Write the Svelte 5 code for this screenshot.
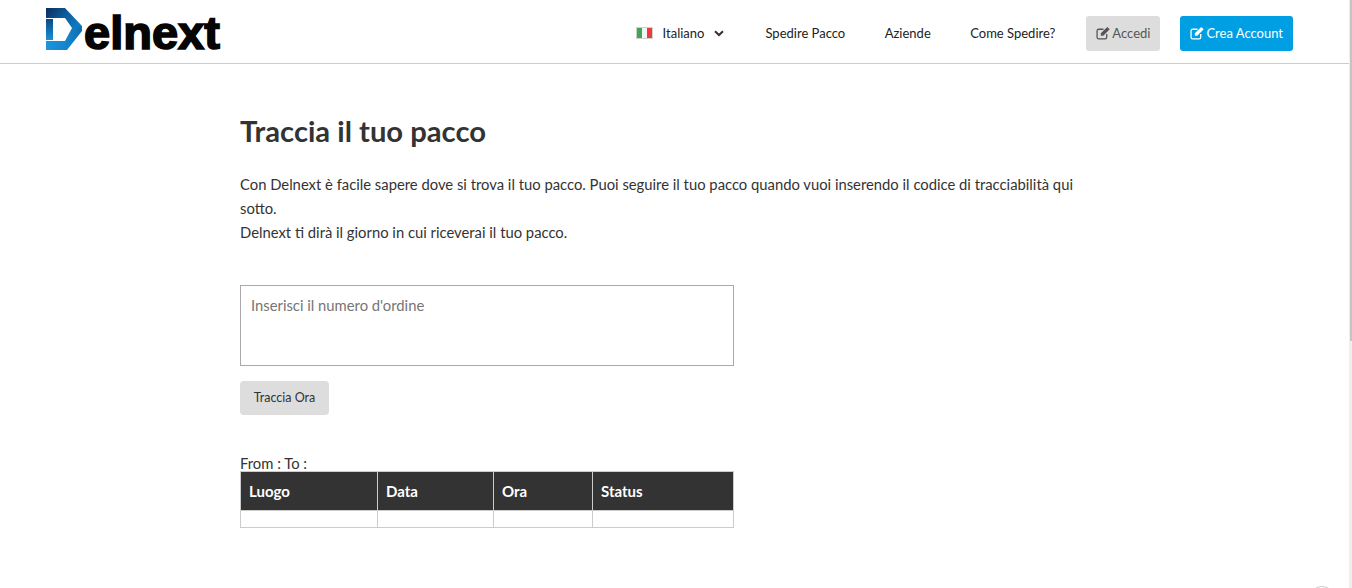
<script>
  const columns = ['Luogo', 'Data', 'Ora', 'Status'];
</script>

<div class="page">
  <header class="header">
    <a class="logo" href="#top">
      <svg class="logo-mark" viewBox="0 0 37 42" width="37" height="42" aria-hidden="true">
        <defs>
          <linearGradient id="top-fold" x1="0" y1="0" x2="1" y2="0.5">
            <stop offset="0" stop-color="#0a2f5c" />
            <stop offset="0.55" stop-color="#0d5c9c" />
            <stop offset="1" stop-color="#1079bf" />
          </linearGradient>
          <linearGradient id="left-bar" x1="0" y1="0" x2="0" y2="1">
            <stop offset="0" stop-color="#0b4a86" />
            <stop offset="1" stop-color="#1a8fd8" />
          </linearGradient>
          <linearGradient id="bottom-fold" x1="0" y1="0" x2="1" y2="0">
            <stop offset="0" stop-color="#1b95de" />
            <stop offset="0.6" stop-color="#1384cc" />
            <stop offset="1" stop-color="#0f6db0" />
          </linearGradient>
        </defs>
        <path d="M0 0H19L36 18V22L26 20L19 10H0Z" fill="url(#top-fold)" />
        <path d="M0 11H7V32H0Z" fill="url(#left-bar)" />
        <path d="M26 20L36 18V23L21 42H0V33H19Z" fill="url(#bottom-fold)" />
      </svg>
      <span class="logo-text">elnext</span>
    </a>
    <nav class="nav">
      <span class="lang">
        <span class="flag"><i class="green"></i><i class="white"></i><i class="red"></i></span>
        <span>Italiano</span>
        <svg class="chevron" viewBox="0 0 10 7" width="10" height="7" aria-hidden="true">
          <path d="M1 1.2L5 5L9 1.2" fill="none" stroke="#333" stroke-width="2" />
        </svg>
      </span>
      <a href="#top" class="first">Spedire Pacco</a>
      <a href="#top" class="tight">Aziende</a>
      <a href="#top" class="tight">Come Spedire?</a>
      <button class="btn grey">
        <svg class="edit" viewBox="0 0 14 13" width="15" height="14" aria-hidden="true">
          <path d="M10 7.5V10.5A1.5 1.5 0 0 1 8.5 12H2.5A1.5 1.5 0 0 1 1 10.5V4.5A1.5 1.5 0 0 1 2.5 3H7" fill="none" stroke="currentColor" stroke-width="1.2" />
          <path d="M4.5 6.8L10.5 0.8L12.8 3L6.8 9H4.5Z" fill="currentColor" />
        </svg>
        Accedi
      </button>
      <button class="btn blue">
        <svg class="edit" viewBox="0 0 14 13" width="15" height="14" aria-hidden="true">
          <path d="M10 7.5V10.5A1.5 1.5 0 0 1 8.5 12H2.5A1.5 1.5 0 0 1 1 10.5V4.5A1.5 1.5 0 0 1 2.5 3H7" fill="none" stroke="currentColor" stroke-width="1.2" />
          <path d="M4.5 6.8L10.5 0.8L12.8 3L6.8 9H4.5Z" fill="currentColor" />
        </svg>
        Crea Account
      </button>
    </nav>
  </header>

  <main class="main">
    <h1>Traccia il tuo pacco</h1>
    <p class="intro">
      Con Delnext è facile sapere dove si trova il tuo pacco. Puoi seguire il tuo pacco quando vuoi inserendo il codice di tracciabilità qui sotto.<br />
      Delnext ti dirà il giorno in cui riceverai il tuo pacco.
    </p>
    <textarea placeholder="Inserisci il numero d'ordine"></textarea>
    <button class="track">Traccia Ora</button>
    <div class="route">From : To :</div>
    <table>
      <thead>
        <tr>
          {#each columns as column}
            <th>{column}</th>
          {/each}
        </tr>
      </thead>
      <tbody>
        <tr>
          {#each columns as column}
            <td></td>
          {/each}
        </tr>
      </tbody>
    </table>
  </main>

  <div class="scrollbar"><div class="thumb"></div></div>
  <div class="chat-bubble"></div>
</div>

<style>
  :global(body) {
    margin: 0;
    background: #fff;
    overflow: hidden;
  }

  .page {
    position: relative;
    height: 588px;
    overflow: hidden;
    font-family: Lato, "Open Sans", sans-serif;
    color: #333;
  }

  .header {
    display: flex;
    justify-content: space-between;
    align-items: flex-start;
    box-sizing: border-box;
    height: 64px;
    padding: 8px 59px 0 46px;
    border-bottom: 1px solid #ccc;
  }

  .logo {
    display: flex;
    align-items: flex-end;
    height: 42px;
    text-decoration: none;
  }

  .logo-mark {
    display: block;
    flex: none;
  }

  .logo-text {
    margin: 0 0 -3px 1px;
    font-family: "Liberation Sans", Arial, sans-serif;
    font-weight: 700;
    font-size: 47px;
    line-height: 40px;
    letter-spacing: 0;
    color: #050505;
    -webkit-text-stroke: 1.7px #050505;
  }

  .nav {
    display: flex;
    align-items: center;
    height: 35px;
    margin-top: 8px;
    font-size: 13px;
    color: #222;
  }

  .nav a {
    margin-left: 40px;
    padding-bottom: 1px;
    color: #222;
    text-decoration: none;
  }

  .nav a.first {
    margin-left: 41px;
  }

  .nav a.tight {
    margin-left: 39.5px;
  }

  .lang {
    display: flex;
    align-items: center;
    padding-bottom: 1px;
  }

  .flag {
    display: flex;
    box-sizing: border-box;
    width: 17px;
    height: 12px;
    margin-right: 10px;
    border: 1px solid rgba(0, 0, 0, 0.18);
  }

  .flag i {
    flex: 1;
  }

  .green {
    background: #3fa651;
  }

  .white {
    background: #f4f4f4;
  }

  .red {
    background: #ec3a3d;
  }

  .chevron {
    margin-left: 10px;
  }

  .btn {
    display: flex;
    align-items: center;
    gap: 1px;
    box-sizing: border-box;
    height: 35px;
    padding: 0 10px 1px;
    border: 0;
    border-radius: 3px;
    font: inherit;
  }

  .grey {
    margin-left: 31px;
    background: #ddd;
    color: #555;
  }

  .blue {
    margin-left: 20px;
    background: #009fe3;
    color: #fff;
  }

  .edit {
    flex: none;
  }

  .main {
    width: 860px;
    margin-left: 240px;
  }

  h1 {
    margin: 0;
    padding-top: 48px;
    font-size: 29.2px;
    line-height: 38px;
    font-weight: 700;
    color: #333;
  }

  .intro {
    margin: 22px 0 0;
    font-size: 14.8px;
    line-height: 24px;
    color: #333;
  }

  textarea {
    display: block;
    box-sizing: border-box;
    width: 494px;
    height: 81px;
    margin: 41px 0 0;
    padding: 9px 10px;
    border: 1px solid #aaa;
    border-radius: 0;
    resize: none;
    font: 14.8px/20px Lato, "Open Sans", sans-serif;
    outline: none;
  }

  textarea::placeholder {
    color: #757575;
    opacity: 1;
  }

  .track {
    display: block;
    box-sizing: border-box;
    width: 89px;
    height: 34px;
    margin-top: 15px;
    padding: 0 0 1px;
    border: 0;
    border-radius: 4px;
    background: #ddd;
    color: #333;
    font: 12.5px Lato, "Open Sans", sans-serif;
  }

  .route {
    margin-top: 39px;
    padding-top: 1px;
    font-size: 14.8px;
    line-height: 16px;
    color: #333;
  }

  table {
    width: 494px;
    border-collapse: collapse;
    table-layout: fixed;
  }

  th,
  td {
    border: 1px solid #ccc;
    padding: 0 8px;
    text-align: left;
  }

  th {
    height: 38px;
    background: #333;
    color: #fff;
    font-size: 15px;
    font-weight: 700;
  }

  th:nth-child(1) {
    width: 120px;
  }

  th:nth-child(2) {
    width: 99px;
  }

  th:nth-child(3) {
    width: 82px;
  }

  td {
    height: 16px;
  }

  .scrollbar {
    position: absolute;
    top: 0;
    right: 0;
    width: 3px;
    height: 588px;
    background: #efefef;
  }

  .thumb {
    width: 2px;
    height: 341px;
    margin-left: 1px;
    background: #c4c4c4;
  }

  .chat-bubble {
    position: absolute;
    left: 1308px;
    top: 586px;
    width: 28px;
    height: 28px;
    box-sizing: border-box;
    border: 1px solid #ccc;
    border-radius: 50%;
    background: #fff;
  }
</style>
